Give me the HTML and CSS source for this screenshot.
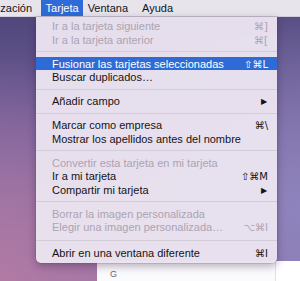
FILE: index.html
```html
<!DOCTYPE html>
<html lang="es">
<head>
<meta charset="UTF-8" />
<title>Tarjeta</title>
<link rel="stylesheet" href="styles.css">
</head>
<body>

<div class="menubar">
  <span class="title cut">zación</span>
  <span class="title open">Tarjeta</span>
  <span class="title">Ventana</span>
  <span class="title last">Ayuda</span>
</div>

<div class="window">
  <div class="list">
    <span class="letter">G</span>
  </div>
  <div class="detail"></div>
</div>

<div class="menu">
  <div class="item off"><span>Ir a la tarjeta siguiente</span><span class="key">⌘]</span></div>
  <div class="item off"><span>Ir a la tarjeta anterior</span><span class="key">⌘[</span></div>
  <div class="sep"></div>
  <div class="item hot"><span>Fusionar las tarjetas seleccionadas</span><span class="key">⇧⌘L</span></div>
  <div class="item"><span>Buscar duplicados…</span></div>
  <div class="sep"></div>
  <div class="item"><span>Añadir campo</span><span class="arrow">▶</span></div>
  <div class="sep"></div>
  <div class="item"><span>Marcar como empresa</span><span class="key">⌘\</span></div>
  <div class="item"><span>Mostrar los apellidos antes del nombre</span></div>
  <div class="sep"></div>
  <div class="item off"><span>Convertir esta tarjeta en mi tarjeta</span></div>
  <div class="item"><span>Ir a mi tarjeta</span><span class="key">⇧⌘M</span></div>
  <div class="item"><span>Compartir mi tarjeta</span><span class="arrow">▶</span></div>
  <div class="sep"></div>
  <div class="item off"><span>Borrar la imagen personalizada</span></div>
  <div class="item off"><span>Elegir una imagen personalizada…</span><span class="key">⌥⌘I</span></div>
  <div class="sep wide"></div>
  <div class="item"><span>Abrir en una ventana diferente</span><span class="key">⌘I</span></div>
</div>

</body>
</html>
```

FILE: styles.css
```css
html, body {
  margin: 0;
  padding: 0;
}

body {
  width: 300px;
  height: 281px;
  overflow: hidden;
  position: relative;
  font-family: "Liberation Sans", Arial, sans-serif;
  font-size: 11px;
  color: #141316;
  background:
    radial-gradient(circle at 0% 100%, #b07aa4 0%, rgba(176, 122, 164, 0) 55%),
    radial-gradient(circle at 100% 75%, #8e84bd 0%, rgba(142, 132, 189, 0) 60%),
    linear-gradient(180deg, #4c4478 0%, #75619c 50%, #9a74a8 100%);
}

.menubar {
  height: 17px;
  display: flex;
  align-items: stretch;
  background: #e7e4ec;
  border-bottom: 1px solid #d2cdd8;
  box-sizing: border-box;
}

.title {
  padding: 0 4.5px;
  line-height: 17px;
}

.title.cut {
  margin-left: -4.2px;
  margin-right: 4.5px;
}

.title.open {
  background: #2e6bd6;
  color: #fff;
}

.title.last {
  margin-left: 5px;
}

.menu {
  position: absolute;
  left: 36px;
  top: 17px;
  width: 241px;
  padding: 2.25px 0 4px;
  background: rgba(234, 227, 240, 0.97);
  border-radius: 0 0 5px 5px;
  box-shadow: 0 3px 8px rgba(40, 20, 60, 0.35), 0 0 0 0.5px rgba(80, 60, 100, 0.25);
}

.item {
  height: 13.5px;
  line-height: 15px;
  padding: 0 9px 0 16px;
  display: flex;
  justify-content: space-between;
  white-space: nowrap;
}

.item.off {
  color: #aaa4b2;
}

.item.hot {
  background: #2e6bd6;
  color: #fff;
}

.key {
  font-family: "DejaVu Sans", sans-serif;
  font-size: 10px;
}

.arrow {
  font-size: 8px;
  padding-right: 1px;
}

.sep {
  height: 1px;
  margin: 4.75px 0;
  background: #d3cdd8;
}

.sep.wide {
  margin: 6px 0 5px;
}

.window {
  position: absolute;
  left: 97px;
  top: 261px;
  right: 0;
  bottom: 0;
  display: flex;
  background: #fbfafc;
}

.list {
  width: 179px;
  border-right: 1px solid #e3e0e6;
  padding: 8px 0 0 13px;
  box-sizing: border-box;
}

.letter {
  display: block;
  font-size: 9px;
  line-height: 10px;
  color: #6e6a72;
}

.detail {
  flex: 1;
  background: #fff;
}
```
